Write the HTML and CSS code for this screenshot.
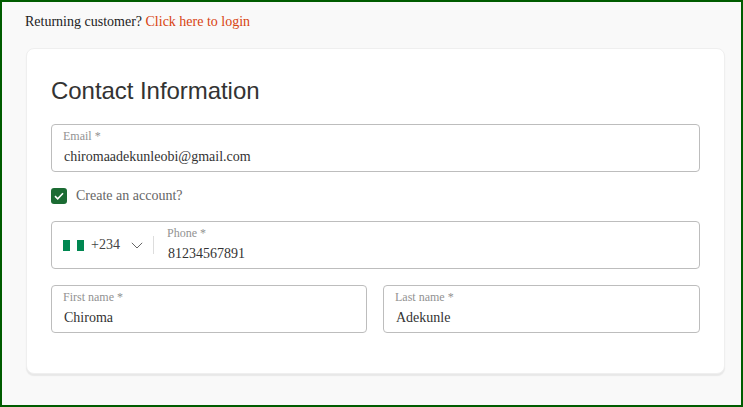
FILE: index.html
```html
<!DOCTYPE html>
<html lang="en">
<head>
  <meta charset="UTF-8" />
  <title>Checkout - Contact Information</title>
  <link rel="stylesheet" href="styles.css">
</head>
<body>
  <div class="page">
    <p class="login-note">Returning customer? <a href="#">Click here to login</a></p>

    <!-- Contact card -->
    <section class="card">
      <h2 class="card-title">Contact Information</h2>

      <div class="field">
        <span class="field-label">Email *</span>
        <span class="field-value">chiromaadekunleobi@gmail.com</span>
      </div>

      <label class="check-row">
        <span class="check-box">
          <svg width="10" height="8" viewBox="0 0 10 8"><path d="M1 4.2 3.7 6.8 9 1.2" fill="none" stroke="#fff" stroke-width="1.6"/></svg>
        </span>
        Create an account?
      </label>

      <div class="field phone-field">
        <div class="country">
          <span class="flag"><i></i><i></i><i></i></span>
          <span class="dial-code">+234</span>
          <svg class="chevron" width="12" height="7" viewBox="0 0 12 7"><path d="M.8.8 6 6 11.2.8" fill="none" stroke="#666" stroke-width="1"/></svg>
        </div>
        <div class="phone-input">
          <span class="field-label">Phone *</span>
          <span class="field-value">81234567891</span>
        </div>
      </div>

      <div class="name-row">
        <div class="field">
          <span class="field-label">First name *</span>
          <span class="field-value">Chiroma</span>
        </div>
        <div class="field">
          <span class="field-label">Last name *</span>
          <span class="field-value">Adekunle</span>
        </div>
      </div>
    </section>
  </div>
</body>
</html>
```

FILE: styles.css
```css
html, body {
  margin: 0;
  padding: 0;
  height: 100%;
  overflow: hidden;
}
.page {
  box-sizing: border-box;
  height: 407px;
  border: 2px solid #005c00;
  background-color: #f9f9f9;
  padding: 0 16px 0 24px;
  font-family: "Liberation Serif", "Times New Roman", serif;
  font-size: 14px;
  color: #222;
}
.login-note {
  margin: 0 0 0 -1px;
  padding-top: 12px;
  height: 34px;
  line-height: 16px;
}
.login-note a {
  color: #d84310;
  text-decoration: none;
}
/* White card holding the form */
.card {
  box-sizing: border-box;
  height: 326px;
  background-color: #fff;
  border: 1px solid #efefef;
  border-radius: 8px;
  box-shadow: 0 2px 1px #e8e8e8;
  padding: 25px 24px 24px;
}
.card-title {
  margin: 0 0 16px;
  font-family: "Liberation Sans", Arial, sans-serif;
  font-size: 24px;
  font-weight: 400;
  line-height: 34px;
  letter-spacing: -0.05px;
  color: #333;
}
.field {
  box-sizing: border-box;
  height: 48px;
  border: 1px solid #bdbdbd;
  border-radius: 4px;
  padding: 3px 11px 0;
}
.field-label {
  display: block;
  font-size: 12px;
  line-height: 16px;
  color: #929292;
}
.field-value {
  display: block;
  padding-left: 1px;
  margin-top: 4px;
  line-height: 18px;
  color: #333;
}
.check-row {
  display: flex;
  align-items: center;
  gap: 9px;
  height: 16px;
  margin: 16px 0 17px;
  color: #666;
}
.check-box {
  display: flex;
  align-items: center;
  justify-content: center;
  width: 16px;
  height: 16px;
  border-radius: 3px;
  background-color: #1b6b33;
}
.phone-field {
  display: flex;
  align-items: center;
  padding: 0 11px;
  margin-bottom: 16px;
}
.country {
  display: flex;
  align-items: center;
  height: 18px;
  width: 90px;
  border-right: 1px solid #ddd;
  color: #444;
}
.flag {
  display: flex;
  width: 21px;
  height: 11px;
  margin-right: 7px;
}
.flag i {
  flex: 1;
  background-color: #008751;
}
.flag i:nth-child(2) {
  background-color: #fff;
}
.chevron {
  margin-left: 11px;
}
.phone-input {
  align-self: flex-start;
  padding: 3px 0 0 13px;
}
.name-row {
  display: grid;
  grid-template-columns: 316px 1fr;
  gap: 16px;
}
```
